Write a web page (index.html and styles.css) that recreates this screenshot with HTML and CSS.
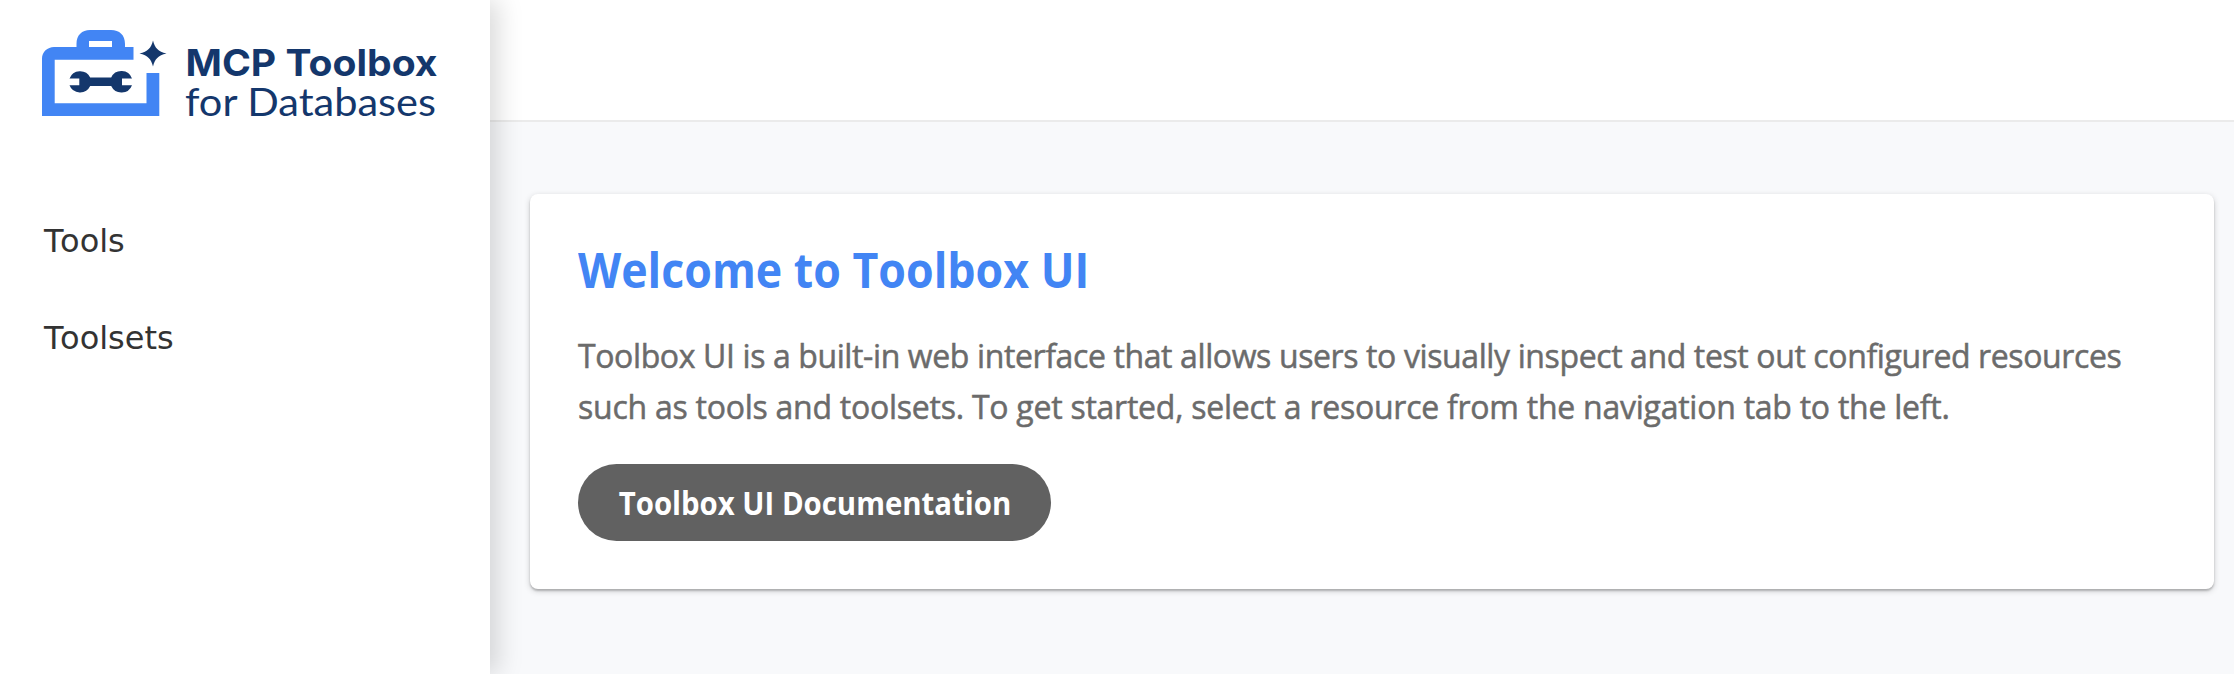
FILE: index.html
```html
<!DOCTYPE html>
<html lang="en">
<head>
<meta charset="utf-8">
<title>Toolbox UI</title>
<link rel="stylesheet" href="styles.css">
</head>
<body>
<aside class="sidebar">
  <svg class="logo" width="410" height="100" viewBox="0 0 410 100" role="img" aria-label="MCP Toolbox for Databases">
    <g class="logo-box">
      <path fill-rule="evenodd" d="M2 86V28.5C2 22 7.500 17 14 17H36.500V14C36.500 5 42 0 50 0H71C79.500 0 85 5 85 14V17H93.500V29.700H14.700V73.300H106.500V43H119.300V86ZM49 17H72V11H49Z"/>
    </g>
    <g class="logo-ink">
      <path d="M113 10.500C115 18 118 21.500 126.500 23.500C118 25.500 115 29 113 36.500C111 29 108 25.500 99.500 23.500C108 21.500 111 18 113 10.500Z"/>
      <path d="M29.500 48.500A11.300 11.300 0 0 1 50.200 47.500H71.200A11.300 11.300 0 0 1 92 48.500H82V55.200H92A11.300 11.300 0 0 1 71.200 56H50.200A11.300 11.300 0 0 1 29.500 55.200H39.300V48.500Z"/>
      <text class="logo-name" x="145.500" y="46.300" textLength="252" lengthAdjust="spacingAndGlyphs">MCP Toolbox</text>
      <text class="logo-sub" x="145" y="85.500" textLength="251" lengthAdjust="spacingAndGlyphs">for Databases</text>
    </g>
  </svg>
  <nav class="nav">
    <a class="nav-link">Tools</a>
    <a class="nav-link">Toolsets</a>
  </nav>
</aside>
<div class="main">
  <header class="topbar"></header>
  <main class="content">
    <section class="card">
      <h1 class="title">Welcome to Toolbox UI</h1>
      <p class="intro"><span class="line-one">Toolbox UI is a built-in web interface that allows users to visually inspect and test out configured resources</span><br><span class="line-two">such as tools and toolsets. To get started, select a resource from the navigation tab to the left.</span></p>
      <a class="button"><span class="button-label">Toolbox UI Documentation</span></a>
    </section>
  </main>
</div>
</body>
</html>
```

FILE: styles.css
```css
* { box-sizing: border-box; }
body {
  margin: 0;
  height: 674px;
  display: flex;
  overflow: hidden;
  background: #f8f9fb;
  font-family: "Trebuchet MS", "Open Sans", sans-serif;
}
.sidebar {
  position: relative;
  z-index: 1;
  flex: 0 0 490px;
  padding: 30px 40px;
  background: #fff;
  box-shadow: 8px 0 24px rgba(0, 0, 0, .15);
}
.logo { display: block; }
.logo-box { fill: #4285f4; }
.logo-ink { fill: #14376c; }
.logo-name { font: 700 37px Inter, sans-serif; }
.logo-sub { font: 400 38px Lato, sans-serif; }
.nav {
  display: flex;
  flex-direction: column;
  margin-top: 63px;
}
.nav-link {
  height: 97px;
  padding: 30px 4px;
  font: 32px/37px "DejaVu Sans", sans-serif;
  color: #333;
}
.nav-link::first-letter { letter-spacing: -3.5px; }
.main { flex: 1; min-width: 0; }
.topbar {
  height: 122px;
  background: #fff;
  border-bottom: 2px solid #ebebeb;
}
.content { padding: 72px 20px 0 40px; }
.card {
  height: 395px;
  padding: 48px;
  background: #fff;
  border-radius: 8px;
  box-shadow: 0 2px 2px rgba(0, 0, 0, .2), 0 2px 6px rgba(0, 0, 0, .18);
}
.title {
  margin: -1px 0 33px;
  font-size: 49px;
  line-height: 56px;
  font-weight: 700;
  color: #4285f4;
  white-space: nowrap;
  transform: scaleX(.912);
  transform-origin: left;
}
.intro {
  margin: 0;
  font-size: 32px;
  line-height: 51px;
  color: #6b6b6b;
  white-space: nowrap;
  -webkit-text-stroke: .5px #6b6b6b;
}
.line-one { letter-spacing: -.385px; }
.line-two { letter-spacing: -.25px; }
.button {
  display: inline-flex;
  align-items: center;
  justify-content: center;
  width: 473px;
  height: 77px;
  margin-top: 32px;
  border-radius: 39px;
  background: #616161;
  color: #fff;
  font-size: 32px;
  font-weight: 700;
  white-space: nowrap;
}
.button-label { transform: scaleX(.917); }
```
